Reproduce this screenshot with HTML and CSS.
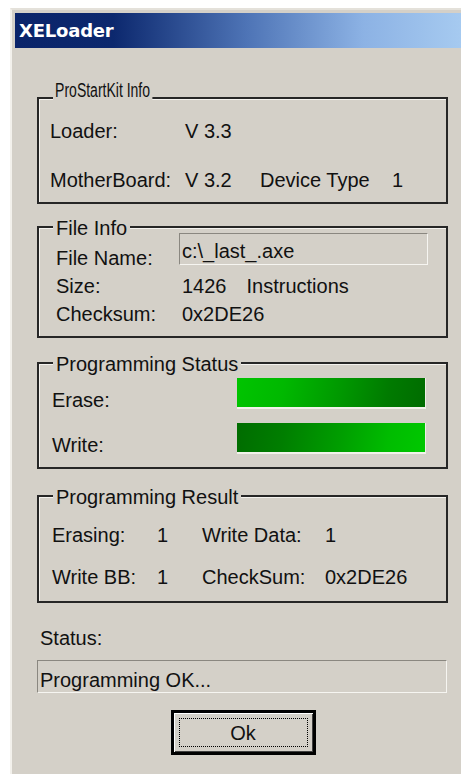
FILE: index.html
```html
<!DOCTYPE html>
<html lang="en">
<head>
<meta charset="utf-8">
<title>XELoader</title>
<link rel="stylesheet" href="styles.css">
</head>
<body>
<div class="window">
  <div class="titlebar">XELoader</div>
  <div class="client">

    <section class="group group-kit">
      <span class="caption caption-kit">ProStartKit Info</span>
      <div class="kit-grid">
        <span class="row-start">Loader:</span><span>V 3.3</span>
        <span class="row-start">MotherBoard:</span><span>V 3.2</span><span>Device Type</span><span>1</span>
      </div>
    </section>

    <section class="group group-file">
      <span class="caption">File Info</span>
      <div class="file-grid">
        <span>File Name:</span><div class="textbox">c:\_last_.axe</div>
        <span>Size:</span><span>1426<span class="unit">Instructions</span></span>
        <span>Checksum:</span><span>0x2DE26</span>
      </div>
    </section>

    <section class="group group-status">
      <span class="caption">Programming Status</span>
      <div class="status-grid">
        <span>Erase:</span><div class="bar bar-erase"></div>
        <span>Write:</span><div class="bar bar-write"></div>
      </div>
    </section>

    <section class="group group-result">
      <span class="caption">Programming Result</span>
      <div class="result-grid">
        <span>Erasing:</span><span>1</span><span>Write Data:</span><span>1</span>
        <span>Write BB:</span><span>1</span><span>CheckSum:</span><span>0x2DE26</span>
      </div>
    </section>

    <div class="status-label">Status:</div>
    <div class="status-field">Programming OK...</div>

    <div class="actions">
      <button class="btn" type="button"><span class="btn-focus">Ok</span></button>
    </div>
  </div>
</div>
</body>
</html>
```

FILE: styles.css
```css
* {
  box-sizing: border-box;
}

html, body {
  margin: 0;
  background: #ffffff;
}

body {
  font-family: "Liberation Sans", Arial, sans-serif;
  font-size: 20px;
  line-height: 20px;
  color: #111111;
}

/* dialog frame */
.window {
  margin: 8px 0 0 10px;
  height: 766px;
  background: #d4d0c8;
  border-left: 2px solid #f3f1ec;
  border-top: 2px solid #e4e1da;
  padding: 3px 0 0 3px;
  display: flex;
  flex-direction: column;
  overflow: hidden;
}

.titlebar {
  height: 35px;
  line-height: 35px;
  padding-left: 4px;
  color: #ffffff;
  font-family: "DejaVu Sans", Verdana, sans-serif;
  font-weight: bold;
  font-size: 18px;
  letter-spacing: -0.2px;
  background: linear-gradient(to right, #0a246a 0%, #0c286e 22%, #4e74b6 52%, #8cb2e4 78%, #a6caf0 100%);
}

.client {
  padding: 0 0 0 22px;
  display: flex;
  flex-direction: column;
}

/* group boxes */
.group {
  position: relative;
  width: 411px;
  border: 2px solid #262626;
  box-shadow: inset 1px 1px 0 #f4f2ee;
}

.caption {
  position: absolute;
  left: 14px;
  top: -10px;
  padding: 0 3px;
  background: #d4d0c8;
  white-space: nowrap;
}

/* the kit caption is drawn in a condensed face */
.caption-kit {
  top: -19px;
  transform: scaleX(0.7);
  transform-origin: left center;
}

.group-kit {
  margin-top: 49px;
  padding: 22px 0 12px 11px;
}

.kit-grid {
  display: grid;
  grid-template-columns: 135px 75px 132px auto;
  row-gap: 29px;
}

.row-start {
  grid-column: 1;
}

.group-file {
  margin-top: 22px;
  padding: 5px 18px 12px 17px;
}

.file-grid {
  display: grid;
  grid-template-columns: 126px 1fr;
  row-gap: 8px;
  align-items: end;
}

.textbox {
  margin-left: -3px;
  margin-bottom: 3px;
  height: 32px;
  padding: 7px 2px 3px 2px;
  border-top: 1px solid #8a8780;
  border-left: 1px solid #8a8780;
  border-bottom: 1px solid #f6f5f1;
  border-right: 1px solid #f6f5f1;
  white-space: nowrap;
}

.unit {
  margin-left: 20px;
}

.group-status {
  margin-top: 24px;
  padding: 14px 0 12px 13px;
}

.status-grid {
  display: grid;
  grid-template-columns: 185px 189px;
  row-gap: 13px;
  align-items: end;
}

.bar {
  height: 31px;
  margin-bottom: 1px;
  border-bottom: 2px solid #f2f2ea;
  border-right: 1px solid #eeeee6;
}

.bar-erase {
  background: linear-gradient(100deg, #00c400 0%, #00b800 25%, #009800 55%, #007a00 80%, #006c00 100%);
}

.bar-write {
  background: linear-gradient(100deg, #006c00 0%, #007e00 25%, #009e00 55%, #00bc00 80%, #00c800 100%);
}

.group-result {
  margin-top: 26px;
  padding: 28px 0 14px 13px;
}

.result-grid {
  display: grid;
  grid-template-columns: 105px 45px 123px auto;
  row-gap: 22px;
}

/* status line */
.status-label {
  margin: 25px 0 0 3px;
}

.status-field {
  width: 410px;
  height: 33px;
  margin-top: 12px;
  padding: 9px 2px 2px 2px;
  border-top: 1px solid #8a8780;
  border-left: 1px solid #8a8780;
  border-bottom: 1px solid #f6f5f1;
  border-right: 1px solid #f6f5f1;
  white-space: nowrap;
}

.actions {
  width: 411px;
  margin-top: 17px;
  display: flex;
  justify-content: center;
}

.btn {
  width: 145px;
  height: 45px;
  padding: 5px;
  margin-left: 1px;
  background: #d4d0c8;
  border: 3px solid #000000;
  box-shadow: inset 1px 1px 0 #ffffff, inset -1px -1px 0 #404040;
  font: inherit;
  color: #111111;
  display: flex;
}

.btn-focus {
  flex: 1;
  border: 1px dotted #000000;
  display: flex;
  align-items: center;
  justify-content: center;
}
```
